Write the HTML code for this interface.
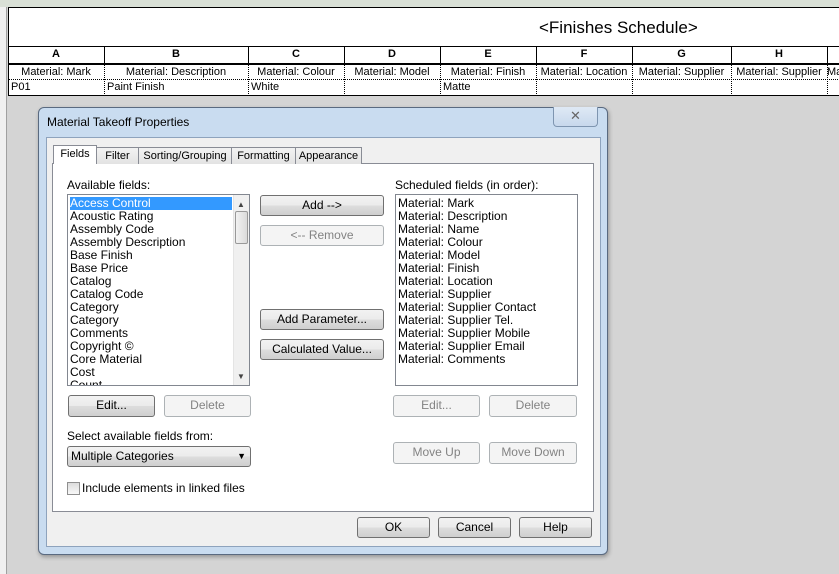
<!DOCTYPE html>
<html><head><meta charset="utf-8"><style>
*{box-sizing:border-box;margin:0;padding:0}
html,body{overflow:hidden}
body{width:839px;height:574px;background:#d4d4d4;position:relative;font-family:"Liberation Sans",Arial,sans-serif;font-size:11px;color:#000}
.a{position:absolute}
.sch{left:8px;top:7px;width:831px;height:89px;background:#fff;border:1px solid #000;border-right:none}
.c{position:absolute;text-align:center;white-space:nowrap;overflow:hidden}
.btn{position:absolute;border:1px solid #707070;border-radius:3px;background:linear-gradient(#f2f2f2 0%,#ebebeb 50%,#dddddd 51%,#cfcfcf 100%);text-align:center;font-size:12px;line-height:19px}
.dis{border-color:#adb2b5;background:#f4f4f4;color:#838383}
.lst{position:absolute;background:#fff;border:1px solid #828790;font-size:12px;line-height:13px;padding:2px 0 0 2px;overflow:hidden}
.tab{position:absolute;top:147px;height:17px;border:1px solid #898c95;border-bottom:none;background:linear-gradient(#f2f2f2,#e3e3e3);font-size:11px;line-height:16px;text-align:center;white-space:nowrap;overflow:hidden}
</style></head><body>
<div class="a" style="left:0;top:0;width:839px;height:7px;background:#d9e0d6"></div>
<div class="a" style="left:0;top:7px;width:7px;height:567px;background:#f0f0f0;border-right:1px solid #a0a0a0"></div>
<div class="a sch">
 <div class="c" style="left:0;width:831px;top:10px;font-size:17px;text-align:left;padding-left:530px">&lt;Finishes Schedule&gt;</div>
 <div class="a" style="left:0;top:38px;width:831px;height:1px;background:#000"></div>
 <div class="a" style="left:0;top:55px;width:831px;height:2px;background:#000"></div>
 <div class="a" style="left:0;top:71px;width:831px;border-top:1px dotted #000"></div>
</div>
<div id="cols" class="a" style="left:0;top:0;width:839px;height:100px;overflow:hidden"></div>
<script>
var b=[8,104,248,344,440,536,632,731,827,900],L="ABCDEFGHI",
h=["Material: Mark","Material: Description","Material: Colour","Material: Model","Material: Finish","Material: Location","Material: Supplier","Material: Supplier","Material: Supplier"],
d=["P01","Paint Finish","White","","Matte","","","",""],s="";
for(var i=0;i<9;i++){var x=b[i],w=b[i+1]-b[i];
if(i>0)s+='<div class="a" style="left:'+x+'px;top:46px;height:17px;border-left:1px solid #000"></div><div class="a" style="left:'+x+'px;top:64px;height:32px;border-left:1px dotted #000"></div>';
s+='<div class="c" style="left:'+x+'px;width:'+w+'px;top:48px;font-weight:bold">'+L[i]+'</div>';
s+='<div class="c" style="left:'+x+'px;width:'+w+'px;top:66px">'+h[i]+'</div>';
s+='<div class="a" style="left:'+(x+3)+'px;top:81px;white-space:nowrap">'+d[i]+'</div>';}
document.getElementById('cols').innerHTML=s;
</script>
<div class="a" style="left:38px;top:107px;width:570px;height:448px;border:1px solid #5a6a80;border-radius:6px;background:#c9dcf0;box-shadow:1px 2px 4px rgba(0,0,0,.3)"></div>
<div class="a" style="left:47px;top:115px;font-size:12px">Material Takeoff Properties</div>
<div class="a" style="left:553px;top:107px;width:45px;height:20px;border:1px solid #7e95b0;border-top:none;border-radius:0 0 4px 4px;background:linear-gradient(#dfe9f5,#c7d8ec);text-align:center;font-size:13px;color:#666;line-height:18px">✕</div>
<div class="a" style="left:46px;top:137px;width:555px;height:410px;background:#f0f0f0;border:1px solid #8ea3bd"></div>
<div class="a" style="left:52px;top:163px;width:542px;height:349px;background:#fff;border:1px solid #898c95"></div>
<div class="tab" style="left:53px;top:145px;width:44px;height:19px;background:#fff;z-index:2">Fields</div>
<div class="tab" style="left:96px;width:43px">Filter</div>
<div class="tab" style="left:138px;width:94px">Sorting/Grouping</div>
<div class="tab" style="left:231px;width:65px">Formatting</div>
<div class="tab" style="left:295px;width:67px">Appearance</div>
<div class="a" style="left:67px;top:178px;font-size:12px">Available fields:</div>
<div class="lst" style="left:67px;top:194px;width:183px;height:192px">
<div style="background:#3399ff;color:#fff;width:162px">Access Control</div>
<div>Acoustic Rating</div><div>Assembly Code</div><div>Assembly Description</div><div>Base Finish</div><div>Base Price</div><div>Catalog</div><div>Catalog Code</div><div>Category</div><div>Category</div><div>Comments</div><div>Copyright ©</div><div>Core Material</div><div>Cost</div><div>Count</div>
<div class="a" style="left:165px;top:0;width:17px;height:190px;background:#f0f0f0;border-left:1px solid #e4e4e4"></div>
<div class="a" style="left:167px;top:16px;width:13px;height:33px;background:linear-gradient(90deg,#f2f2f2,#dadada);border:1px solid #999;border-radius:2px"></div>
<div class="a" style="left:169px;top:3px;font-size:8px;color:#444">▲</div>
<div class="a" style="left:169px;top:175px;font-size:8px;color:#444">▼</div>
</div>
<div class="btn" style="left:260px;top:195px;width:124px;height:21px">Add --&gt;</div>
<div class="btn dis" style="left:260px;top:225px;width:124px;height:21px">&lt;-- Remove</div>
<div class="btn" style="left:260px;top:309px;width:124px;height:21px">Add Parameter...</div>
<div class="btn" style="left:260px;top:339px;width:124px;height:21px">Calculated Value...</div>
<div class="a" style="left:395px;top:178px;font-size:12px">Scheduled fields (in order):</div>
<div class="lst" style="left:395px;top:194px;width:183px;height:192px">
<div>Material: Mark</div><div>Material: Description</div><div>Material: Name</div><div>Material: Colour</div><div>Material: Model</div><div>Material: Finish</div><div>Material: Location</div><div>Material: Supplier</div><div>Material: Supplier Contact</div><div>Material: Supplier Tel.</div><div>Material: Supplier Mobile</div><div>Material: Supplier Email</div><div>Material: Comments</div></div>
<div class="btn" style="left:68px;top:395px;width:87px;height:22px">Edit...</div>
<div class="btn dis" style="left:164px;top:395px;width:87px;height:22px">Delete</div>
<div class="btn dis" style="left:393px;top:395px;width:87px;height:22px">Edit...</div>
<div class="btn dis" style="left:489px;top:395px;width:88px;height:22px">Delete</div>
<div class="a" style="left:67px;top:429px;font-size:12px">Select available fields from:</div>
<div class="btn" style="left:67px;top:446px;width:184px;height:21px;text-align:left;padding-left:3px">Multiple Categories<span style="position:absolute;right:4px;top:0;font-size:9px">▼</span></div>
<div class="a" style="left:67px;top:482px;width:13px;height:13px;border:1px solid #8f8f8f;background:linear-gradient(#dcdcdc,#f8f8f8)"></div>
<div class="a" style="left:82px;top:481px;font-size:12px">Include elements in linked files</div>
<div class="btn dis" style="left:393px;top:442px;width:87px;height:22px">Move Up</div>
<div class="btn dis" style="left:489px;top:442px;width:88px;height:22px">Move Down</div>
<div class="btn" style="left:357px;top:517px;width:73px;height:21px">OK</div>
<div class="btn" style="left:438px;top:517px;width:73px;height:21px">Cancel</div>
<div class="btn" style="left:519px;top:517px;width:73px;height:21px">Help</div>
</body></html>
